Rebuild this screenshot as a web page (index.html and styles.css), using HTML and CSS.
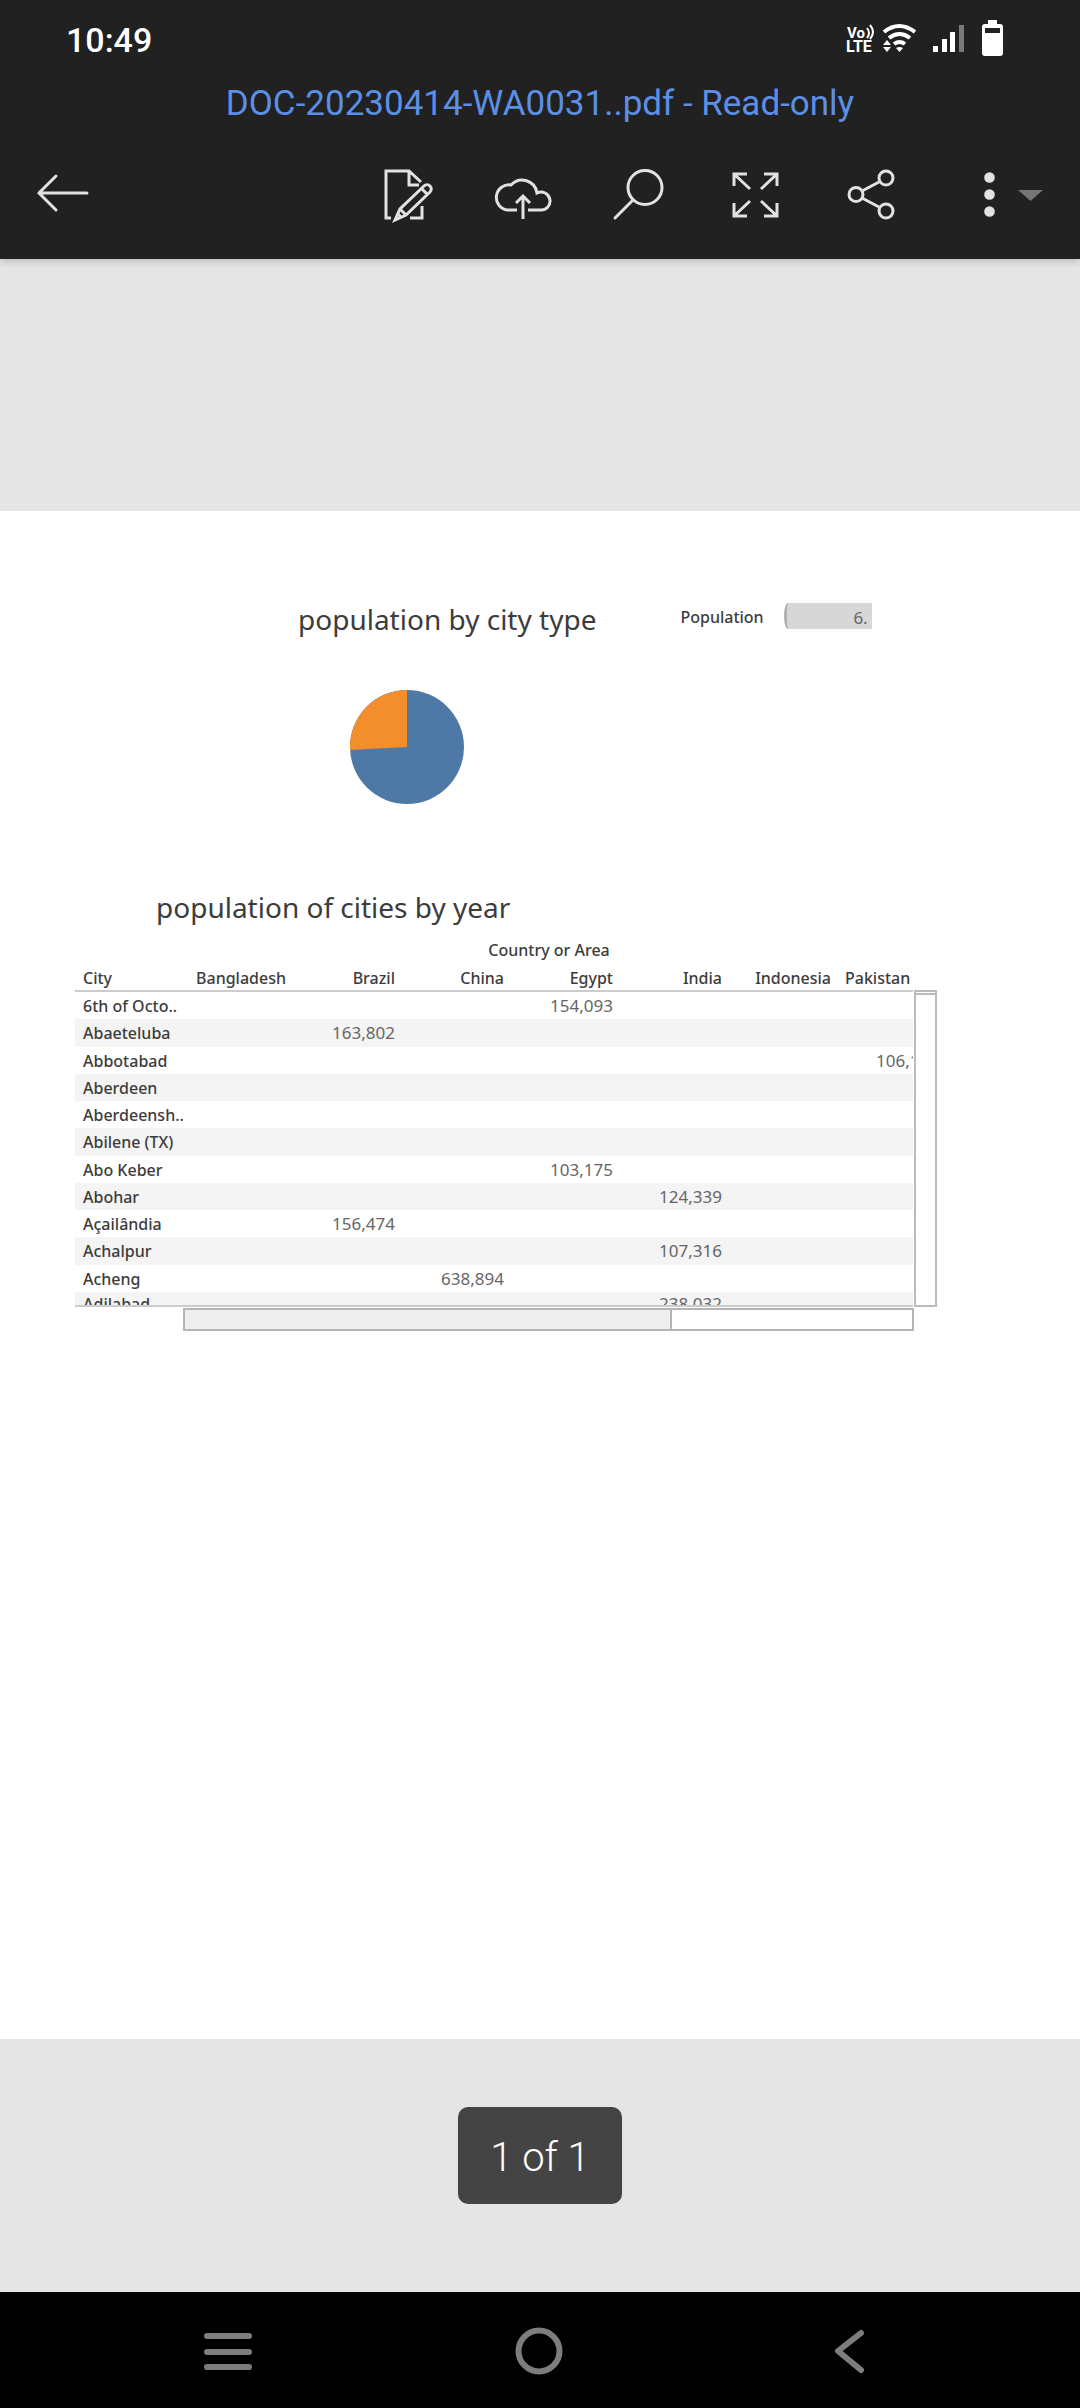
FILE: index.html
```html
<!DOCTYPE html>
<html lang="en">
<head>
<meta charset="utf-8">
<meta name="viewport" content="width=device-width, initial-scale=1">
<title>DOC-20230414-WA0031..pdf</title>
<link rel="stylesheet" href="styles.css">
</head>
<body>
<header class="app-header">
  <div class="status-bar">
    <time class="clock">10:49</time>
    <svg class="status-icons" viewBox="840 16 168 44" aria-hidden="true">
      <g fill="#fff" font-family="Roboto, sans-serif" font-weight="700">
        <text x="847" y="38" font-size="15">Vo</text>
        <text x="846" y="52" font-size="16">LTE</text>
      </g>
      <g fill="none" stroke="#fff" stroke-width="2">
        <path d="M867 28q4 5 0 10M870 25q6 7 0 14"/>
      </g>
      <g fill="none" stroke="#fff" stroke-width="4">
        <path d="M884 32q15-12 31 0M889 38q10.500-8 21 0" />
        <path d="M894 44q5.500-4 11 0" />
      </g>
      <path fill="#fff" d="M883 45l4-5 4 5zM883 47h8l-4 5zM896 48q3.500-2 7 0l-3.500 4z"/>
      <path fill="#fff" d="M933 46h5v6h-5zM942 39h5v13h-5zM950 32h5v20h-5z"/>
      <path fill="#7a7a7a" d="M959 25h5v27h-5z"/>
      <path fill="#fff" fill-rule="evenodd" d="M988 20h9v4h3q3 0 3 3v26q0 3-3 3h-15q-3 0-3-3V27q0-3 3-3h3zM985 28v5h15v-5z"/>
    </svg>
  </div>
  <h1 class="doc-title">DOC-20230414-WA0031..pdf - Read-only</h1>
  <nav class="toolbar" aria-label="Document">
    <button class="tool tool-back" aria-label="Back">
      <svg viewBox="5 153 116 80"><path d="M87 193H39M56 176L39 193l17 17" stroke-linecap="round"/></svg>
    </button>
    <button class="tool" aria-label="Edit">
      <svg viewBox="350 153 116 80">
        <path d="M391 218h-5V171h23l12 11M409 171v14h10M422 206v12h-12"/>
        <path d="M395 220l5-11 24-23a4 4 0 0 1 6 6l-24 23zM400 209l6 6M421 188l7 7M398 214l3 3"/>
      </svg>
    </button>
    <button class="tool" aria-label="Upload">
      <svg viewBox="466 153 116 80"><path d="M517 210H507a12 12 0 0 1 4-25a15 15 0 0 1 26 8a9 9 0 1 1 3 17h-12M523 219V196M516 203l7-7 7 7"/></svg>
    </button>
    <button class="tool" aria-label="Search">
      <svg viewBox="582 153 116 80"><circle cx="645" cy="187.500" r="17"/><path d="M633 200l-18 18" stroke-linecap="round"/></svg>
    </button>
    <button class="tool" aria-label="Full screen">
      <svg viewBox="698 153 116 80"><path d="M747 174h-13v12M734 174l16 15M764 174h13v12M777 174l-16 15M747 216h-13v-13M734 216l16-15M764 216h13v-13M777 216l-16-15"/></svg>
    </button>
    <button class="tool" aria-label="Share">
      <svg viewBox="814 153 116 80"><circle cx="856" cy="194.500" r="7"/><circle cx="886" cy="178" r="7"/><circle cx="886" cy="211" r="7"/><path d="M862 191l17-9M862 198l17 9"/></svg>
    </button>
    <button class="tool" aria-label="More options">
      <svg viewBox="930 153 116 80"><g class="dots"><circle cx="989.500" cy="177.500" r="5.300"/><circle cx="989.500" cy="194.500" r="5.300"/><circle cx="989.500" cy="211.500" r="5.300"/></g><path class="caret" d="M1018 190h25l-12.500 11z"/></svg>
    </button>
  </nav>
</header>

<main class="viewer">
  <article class="sheet">
    <section class="summary">
      <div class="type-chart">
        <h2 class="chart-title">population by city type</h2>
        <svg class="pie" viewBox="0 0 114 114" role="img" aria-label="Population share by city type">
          <circle cx="57" cy="57" r="57" fill="#4e79a7"/>
          <path d="M57 57V0A57 57 0 0 0 0 60z" fill="#f28e2b"/>
        </svg>
      </div>
      <div class="legend">
        <label for="population">Population</label>
        <input id="population" type="text" value="6." readonly>
      </div>
    </section>

    <section class="cities">
      <h2 class="chart-title cities-title">population of cities by year</h2>
      <div class="grid-frame">
        <div class="table-clip">
          <table>
            <colgroup><col span="8"></colgroup>
            <thead>
              <tr class="group-row"><th></th><th colspan="7" class="group">Country or Area</th></tr>
              <tr class="names"><th>City</th><th>Bangladesh</th><th>Brazil</th><th>China</th><th>Egypt</th><th>India</th><th>Indonesia</th><th class="cut-name">Pakistan</th></tr>
            </thead>
            <tbody>
              <tr><th>6th of Octo..</th><td></td><td></td><td></td><td>154,093</td><td></td><td></td><td></td></tr>
              <tr><th>Abaeteluba</th><td></td><td>163,802</td><td></td><td></td><td></td><td></td><td></td></tr>
              <tr><th>Abbotabad</th><td></td><td></td><td></td><td></td><td></td><td></td><td class="cut-value">106,1</td></tr>
              <tr><th>Aberdeen</th><td></td><td></td><td></td><td></td><td></td><td></td><td></td></tr>
              <tr><th>Aberdeensh..</th><td></td><td></td><td></td><td></td><td></td><td></td><td></td></tr>
              <tr><th>Abilene (TX)</th><td></td><td></td><td></td><td></td><td></td><td></td><td></td></tr>
              <tr><th>Abo Keber</th><td></td><td></td><td></td><td>103,175</td><td></td><td></td><td></td></tr>
              <tr><th>Abohar</th><td></td><td></td><td></td><td></td><td>124,339</td><td></td><td></td></tr>
              <tr><th>Açailândia</th><td></td><td>156,474</td><td></td><td></td><td></td><td></td><td></td></tr>
              <tr><th>Achalpur</th><td></td><td></td><td></td><td></td><td>107,316</td><td></td><td></td></tr>
              <tr><th>Acheng</th><td></td><td></td><td>638,894</td><td></td><td></td><td></td><td></td></tr>
              <tr class="last"><th>Adilabad</th><td></td><td></td><td></td><td></td><td>238,032</td><td></td><td></td></tr>
            </tbody>
          </table>
        </div>
        <div class="vbar"><div class="vthumb"></div></div>
        <div class="hbar"><div class="hthumb"></div></div>
      </div>
    </section>
  </article>
  <p class="page-count">1 of 1</p>
</main>

<nav class="system-nav" aria-label="System">
  <button class="sys" aria-label="Recent apps"><svg viewBox="0 0 60 60"><path d="M9 12h42M9 28h42M9 43h42" stroke-linecap="round"/></svg></button>
  <button class="sys" aria-label="Home"><svg viewBox="0 0 60 60"><circle cx="30" cy="27" r="20.500"/></svg></button>
  <button class="sys" aria-label="Back"><svg viewBox="0 0 60 60"><path d="M41 9L18 27l23 19" stroke-linecap="round" stroke-linejoin="round"/></svg></button>
</nav>
</body>
</html>
```
FILE: styles.css
```css
* { box-sizing: border-box; }

body {
  margin: 0;
  min-height: 100vh;
  display: flex;
  flex-direction: column;
  background: #e5e5e5;
  font-family: Roboto, sans-serif;
}

button {
  padding: 0;
  border: 0;
  background: none;
}

svg { display: block; }

/* Header */
.app-header {
  position: relative;
  background: #212121;
  box-shadow: 0 2px 8px rgba(0, 0, 0, 0.2);
}

.status-bar {
  display: flex;
  justify-content: space-between;
  padding: 16px 72px 0 66px;
  height: 72px;
}

.clock {
  color: #fff;
  font-size: 34px;
  font-weight: 500;
  line-height: 48px;
}

.status-icons { width: 168px; height: 44px; }

.doc-title {
  margin: 0;
  color: #5c8fe6;
  font-size: 35px;
  font-weight: 400;
  line-height: 64px;
  text-align: center;
}

.toolbar {
  display: flex;
  height: 123px;
  padding: 17px 34px 0 5px;
}

.tool { width: 116px; height: 80px; }
.tool-back { margin-right: auto; }

.tool svg {
  width: 116px;
  height: 80px;
  fill: none;
  stroke: #e2e2e2;
  stroke-width: 3;
}

.tool .dots { fill: #e2e2e2; stroke: none; }
.tool .caret { fill: #757575; stroke: none; }

/* Document */
.viewer {
  flex: 1;
  display: flex;
  flex-direction: column;
  padding-top: 252px;
}

.sheet {
  flex: 1;
  padding: 80px 142px 0 75px;
  background: #fff;
  color: #3c3c3c;
  font-family: "Noto Sans", sans-serif;
}

.chart-title {
  margin: 0;
  font-size: 28px;
  font-weight: 400;
  line-height: 56px;
}

.summary {
  display: flex;
  gap: 84px;
  padding-left: 223px;
  height: 288px;
}

.pie {
  width: 114px;
  height: 114px;
  margin: 43px 0 0 52px;
}

.legend {
  display: flex;
  align-items: center;
  gap: 20px;
  height: 50px;
  font-size: 16px;
  font-weight: 500;
}

.legend input {
  width: 88px;
  height: 26px;
  padding: 2px 4px 0;
  border: 0;
  border-left: 3px solid #b0b0b0;
  border-radius: 4px 0 0 4px / 13px 0 0 13px;
  background: #d7d7d7;
  color: #666;
  font: 400 17px "Noto Sans", sans-serif;
  text-align: right;
}

.legend label { padding-top: 2px; }

.cities-title { padding-left: 81px; }

.grid-frame {
  display: grid;
  grid-template-columns: 108px 1fr 24px;
  grid-template-rows: 372px 24px;
}

.table-clip {
  grid-column: 1 / 3;
  overflow: hidden;
  margin-right: 1px;
  border-bottom: 2px solid #ccc;
}

table {
  width: 872px;
  border-collapse: separate;
  border-spacing: 0;
  table-layout: fixed;
  font-size: 16px;
  line-height: 24px;
}

th, td {
  padding: 0;
  white-space: nowrap;
}

th {
  font-weight: 500;
  text-align: right;
}

th:first-child { padding-left: 8px; text-align: left; }

th + th, td { padding-right: 7px; }

td {
  color: #666;
  font-size: 17px;
  font-weight: 400;
  text-align: right;
}

.group-row { height: 28px; }
.names { height: 29px; }
thead th { padding-top: 2px; }
.names th { border-bottom: 2px solid #ccc; }
.group-row .group { padding-right: 33px; text-align: center; }
.names .cut-name { padding-left: 7px; text-align: left; }
.cut-value { padding-left: 38px; text-align: left; }

tbody tr { height: 27px; }
tbody tr:nth-child(even) { height: 28px; background: #f4f4f4; }
tbody tr:nth-child(4n) { height: 27px; }
.last th, .last td { vertical-align: top; }

.vbar {
  grid-column: 3;
  height: 317px;
  align-self: end;
  margin-right: 1px;
  border: 2px solid #bbb;
}

.vthumb {
  height: 3px;
  border-bottom: 2px solid #bbb;
}

.hbar {
  grid-column: 2;
  margin-top: 1px;
  border: 2px solid #b4b4b4;
}

.hthumb {
  width: 67%;
  height: 100%;
  border-right: 2px solid #b4b4b4;
  background: #efefef;
}

.page-count {
  align-self: center;
  margin: 68px 0 88px;
  padding: 4px 32px 0;
  border-radius: 10px;
  background: #444;
  color: #fff;
  font-size: 40px;
  font-weight: 300;
  line-height: 93px;
}

/* Android navigation */
.system-nav {
  display: flex;
  justify-content: space-between;
  height: 116px;
  padding: 32px 200px 0 198px;
  background: #000;
}

.sys { width: 60px; height: 60px; }

.sys svg {
  width: 60px;
  height: 60px;
  fill: none;
  stroke: #7d7d7d;
  stroke-width: 6;
}
```
